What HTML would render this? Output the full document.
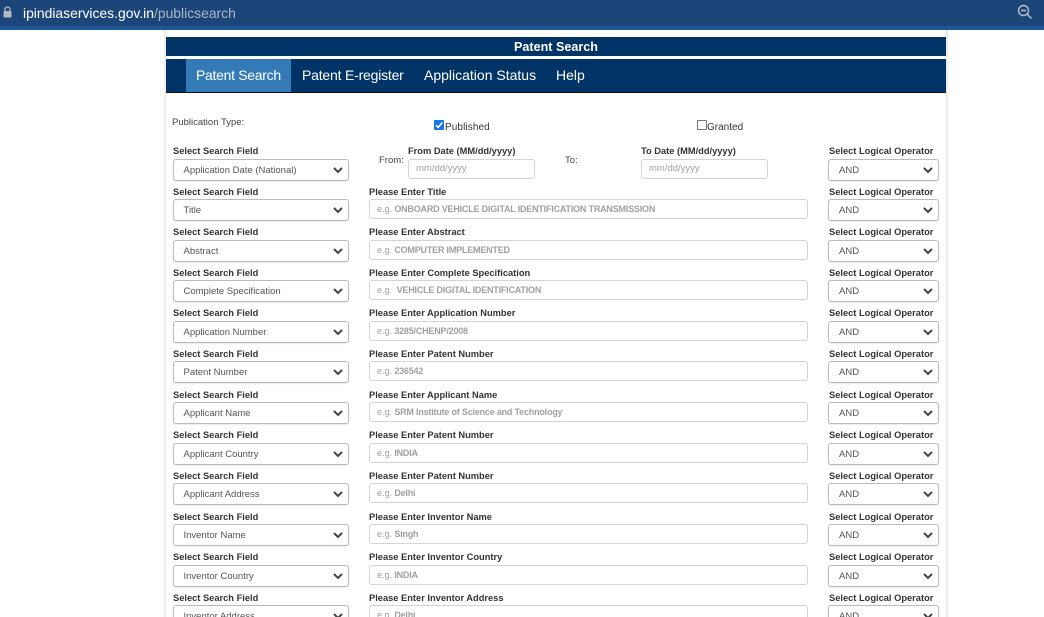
<!DOCTYPE html>
<html><head><meta charset="utf-8">
<style>
html,body{margin:0;padding:0;width:1044px;height:617px;overflow:hidden;background:#fff;font-family:"Liberation Sans",Arial,sans-serif}
#v{position:relative;width:1044px;height:617px;overflow:hidden}
#v div,#v svg{position:absolute}
.t{white-space:nowrap}
.l{font-size:9.3px;font-weight:bold;color:#333;line-height:12px;white-space:nowrap}
.s{border:1px solid #bbb;border-radius:3px;height:22px;line-height:22px;box-sizing:border-box;background:#fff;font-size:9.5px;color:#555;box-shadow:0 1px 1px rgba(0,0,0,.08);white-space:nowrap;padding-left:10px}
.a{left:172.5px;width:176.5px}
.b{left:828px;width:111px}
.s svg{right:4px;top:6px}
.i{left:369px;width:439px;height:20px;border:1px solid #d4d4d4;border-radius:3px;box-sizing:border-box;background:#fff;font-size:9px;letter-spacing:-.2px;font-weight:bold;color:#a0a0a0;line-height:19px;padding-left:7px;white-space:nowrap}
.i span{font-weight:normal;letter-spacing:0}
.d{font-size:9.5px;letter-spacing:0;line-height:18px;font-weight:normal;width:127px}
</style></head><body><div id="v">
<div style="left:0;top:0;width:1044px;height:26px;background:#1c4679"></div>
<div style="left:0;top:26px;width:1044px;height:4px;background:#1f5698"></div>
<svg style="left:3px;top:6px" width="9" height="12" viewBox="0 0 9 12"><path d="M2 5V3.5a2.5 2.5 0 0 1 5 0V5" fill="none" stroke="#b4b9c2" stroke-width="1.3"/><rect x="0.5" y="5" width="8" height="6.5" rx="1" fill="#b4b9c2"/></svg>
<div class="t" style="left:23px;top:4px;font-size:13.9px;line-height:18px;color:#fff">ipindiaservices.gov.in<span style="color:#a9b6c8">/publicsearch</span></div>
<svg style="left:1017px;top:4px" width="16" height="16" viewBox="0 0 16 16"><circle cx="6.5" cy="6.5" r="5" fill="none" stroke="#b5bdc8" stroke-width="1.4"/><path d="M4 6.5h5M10.3 10.3L14.5 14.5" fill="none" stroke="#b5bdc8" stroke-width="1.5"/></svg>

<div style="left:163px;top:30px;width:3px;height:587px;background:linear-gradient(90deg,#fff,#e6e6e6)"></div>
<div style="left:946px;top:30px;width:3px;height:587px;background:linear-gradient(90deg,#e2e2e2,#fff)"></div>

<div style="left:166px;top:37px;width:780px;height:19px;background:#003366"></div>
<div class="t" style="left:166px;top:37px;width:780px;height:19px;line-height:20px;text-align:center;color:#fff;font-size:12.6px;font-weight:bold">Patent Search</div>
<div style="left:166px;top:59px;width:780px;height:33px;background:#003366"></div>
<div style="left:166px;top:92px;width:780px;height:1px;background:#111"></div>
<div style="left:186px;top:59px;width:105px;height:33px;background:#337ab7"></div>
<div class="t" style="left:196px;top:59px;line-height:33px;font-size:14px;letter-spacing:-.3px;color:#fff">Patent Search</div>
<div class="t" style="left:302px;top:59px;line-height:33px;font-size:14px;letter-spacing:-.2px;color:#fff">Patent E-register</div>
<div class="t" style="left:424px;top:59px;line-height:33px;font-size:14px;color:#fff">Application Status</div>
<div class="t" style="left:556px;top:59px;line-height:33px;font-size:14px;color:#fff">Help</div>

<div class="t" style="left:172px;top:117px;font-size:9.5px;line-height:12px;color:#444">Publication Type:</div>
<div style="left:434px;top:120px;width:10px;height:10px;background:#1a73e8;border-radius:1px"></div>
<svg style="left:434px;top:120px" width="10" height="10" viewBox="0 0 10 10"><path d="M2 5.2L4.2 7.4L8.2 2.6" fill="none" stroke="#fff" stroke-width="1.6"/></svg>
<div class="t" style="left:445px;top:120.5px;font-size:10px;line-height:13px;color:#333;letter-spacing:.1px">Published</div>
<div style="left:697px;top:120px;width:10px;height:10px;box-sizing:border-box;border:1px solid #777;border-radius:1px;background:#fff"></div>
<div class="t" style="left:707px;top:120.5px;font-size:10px;line-height:13px;color:#333">Granted</div>

<div class="l" style="left:173px;top:145px">Select Search Field</div>
<div class="s a" style="top:158.5px">Application Date (National)<svg width="12" height="8" viewBox="0 0 12 8"><path d="M2 2L6 6L10 2" fill="none" stroke="#444" stroke-width="2"/></svg></div>
<div class="t" style="left:379px;top:155px;font-size:9.5px;line-height:12px;color:#444">From:</div>
<div class="l" style="left:408px;top:145px">From Date (MM/dd/yyyy)</div>
<div class="i d" style="left:408px;top:158.5px">mm/dd/yyyy</div>
<div class="t" style="left:565px;top:155px;font-size:9.5px;line-height:12px;color:#444">To:</div>
<div class="l" style="left:641px;top:145px">To Date (MM/dd/yyyy)</div>
<div class="i d" style="left:641px;top:158.5px">mm/dd/yyyy</div>
<div class="l" style="left:829px;top:145px">Select Logical Operator</div>
<div class="s b" style="top:158.5px">AND<svg width="12" height="8" viewBox="0 0 12 8"><path d="M2 2L6 6L10 2" fill="none" stroke="#444" stroke-width="2"/></svg></div>

<div class="l" style="left:173px;top:185.5px">Select Search Field</div>
<div class="s a" style="top:199.3px">Title<svg width="12" height="8" viewBox="0 0 12 8"><path d="M2 2L6 6L10 2" fill="none" stroke="#444" stroke-width="2"/></svg></div>
<div class="l" style="left:369px;top:185.5px">Please Enter Title</div>
<div class="i" style="top:199.3px"><span>e.g.</span> ONBOARD VEHICLE DIGITAL IDENTIFICATION TRANSMISSION</div>
<div class="l" style="left:829px;top:185.5px">Select Logical Operator</div>
<div class="s b" style="top:199.3px">AND<svg width="12" height="8" viewBox="0 0 12 8"><path d="M2 2L6 6L10 2" fill="none" stroke="#444" stroke-width="2"/></svg></div>

<div class="l" style="left:173px;top:226px">Select Search Field</div>
<div class="s a" style="top:239.7px">Abstract<svg width="12" height="8" viewBox="0 0 12 8"><path d="M2 2L6 6L10 2" fill="none" stroke="#444" stroke-width="2"/></svg></div>
<div class="l" style="left:369px;top:226px">Please Enter Abstract</div>
<div class="i" style="top:239.7px;line-height:18px"><span>e.g.</span> COMPUTER IMPLEMENTED</div>
<div class="l" style="left:829px;top:226px">Select Logical Operator</div>
<div class="s b" style="top:239.7px">AND<svg width="12" height="8" viewBox="0 0 12 8"><path d="M2 2L6 6L10 2" fill="none" stroke="#444" stroke-width="2"/></svg></div>

<div class="l" style="left:173px;top:266.5px">Select Search Field</div>
<div class="s a" style="top:280.3px">Complete Specification<svg width="12" height="8" viewBox="0 0 12 8"><path d="M2 2L6 6L10 2" fill="none" stroke="#444" stroke-width="2"/></svg></div>
<div class="l" style="left:369px;top:266.5px">Please Enter Complete Specification</div>
<div class="i" style="top:280.3px"><span>e.g.</span>&nbsp; VEHICLE DIGITAL IDENTIFICATION</div>
<div class="l" style="left:829px;top:266.5px">Select Logical Operator</div>
<div class="s b" style="top:280.3px">AND<svg width="12" height="8" viewBox="0 0 12 8"><path d="M2 2L6 6L10 2" fill="none" stroke="#444" stroke-width="2"/></svg></div>

<div class="l" style="left:173px;top:307px">Select Search Field</div>
<div class="s a" style="top:320.8px">Application Number<svg width="12" height="8" viewBox="0 0 12 8"><path d="M2 2L6 6L10 2" fill="none" stroke="#444" stroke-width="2"/></svg></div>
<div class="l" style="left:369px;top:307px">Please Enter Application Number</div>
<div class="i" style="top:320.8px"><span>e.g.</span> 3285/CHENP/2008</div>
<div class="l" style="left:829px;top:307px">Select Logical Operator</div>
<div class="s b" style="top:320.8px">AND<svg width="12" height="8" viewBox="0 0 12 8"><path d="M2 2L6 6L10 2" fill="none" stroke="#444" stroke-width="2"/></svg></div>

<div class="l" style="left:173px;top:347.5px">Select Search Field</div>
<div class="s a" style="top:361.4px">Patent Number<svg width="12" height="8" viewBox="0 0 12 8"><path d="M2 2L6 6L10 2" fill="none" stroke="#444" stroke-width="2"/></svg></div>
<div class="l" style="left:369px;top:347.5px">Please Enter Patent Number</div>
<div class="i" style="top:361.4px"><span>e.g.</span> 236542</div>
<div class="l" style="left:829px;top:347.5px">Select Logical Operator</div>
<div class="s b" style="top:361.4px">AND<svg width="12" height="8" viewBox="0 0 12 8"><path d="M2 2L6 6L10 2" fill="none" stroke="#444" stroke-width="2"/></svg></div>

<div class="l" style="left:173px;top:388.5px">Select Search Field</div>
<div class="s a" style="top:402px">Applicant Name<svg width="12" height="8" viewBox="0 0 12 8"><path d="M2 2L6 6L10 2" fill="none" stroke="#444" stroke-width="2"/></svg></div>
<div class="l" style="left:369px;top:388.5px">Please Enter Applicant Name</div>
<div class="i" style="top:402px"><span>e.g.</span> SRM Institute of Science and Technology</div>
<div class="l" style="left:829px;top:388.5px">Select Logical Operator</div>
<div class="s b" style="top:402px">AND<svg width="12" height="8" viewBox="0 0 12 8"><path d="M2 2L6 6L10 2" fill="none" stroke="#444" stroke-width="2"/></svg></div>

<div class="l" style="left:173px;top:429px">Select Search Field</div>
<div class="s a" style="top:442.7px">Applicant Country<svg width="12" height="8" viewBox="0 0 12 8"><path d="M2 2L6 6L10 2" fill="none" stroke="#444" stroke-width="2"/></svg></div>
<div class="l" style="left:369px;top:429px">Please Enter Patent Number</div>
<div class="i" style="top:442.7px"><span>e.g.</span> INDIA</div>
<div class="l" style="left:829px;top:429px">Select Logical Operator</div>
<div class="s b" style="top:442.7px">AND<svg width="12" height="8" viewBox="0 0 12 8"><path d="M2 2L6 6L10 2" fill="none" stroke="#444" stroke-width="2"/></svg></div>

<div class="l" style="left:173px;top:470px">Select Search Field</div>
<div class="s a" style="top:483.3px">Applicant Address<svg width="12" height="8" viewBox="0 0 12 8"><path d="M2 2L6 6L10 2" fill="none" stroke="#444" stroke-width="2"/></svg></div>
<div class="l" style="left:369px;top:470px">Please Enter Patent Number</div>
<div class="i" style="top:483.3px"><span>e.g.</span> Delhi</div>
<div class="l" style="left:829px;top:470px">Select Logical Operator</div>
<div class="s b" style="top:483.3px">AND<svg width="12" height="8" viewBox="0 0 12 8"><path d="M2 2L6 6L10 2" fill="none" stroke="#444" stroke-width="2"/></svg></div>

<div class="l" style="left:173px;top:510.5px">Select Search Field</div>
<div class="s a" style="top:524px">Inventor Name<svg width="12" height="8" viewBox="0 0 12 8"><path d="M2 2L6 6L10 2" fill="none" stroke="#444" stroke-width="2"/></svg></div>
<div class="l" style="left:369px;top:510.5px">Please Enter Inventor Name</div>
<div class="i" style="top:524px"><span>e.g.</span> Singh</div>
<div class="l" style="left:829px;top:510.5px">Select Logical Operator</div>
<div class="s b" style="top:524px">AND<svg width="12" height="8" viewBox="0 0 12 8"><path d="M2 2L6 6L10 2" fill="none" stroke="#444" stroke-width="2"/></svg></div>

<div class="l" style="left:173px;top:551px">Select Search Field</div>
<div class="s a" style="top:564.5px">Inventor Country<svg width="12" height="8" viewBox="0 0 12 8"><path d="M2 2L6 6L10 2" fill="none" stroke="#444" stroke-width="2"/></svg></div>
<div class="l" style="left:369px;top:551px">Please Enter Inventor Country</div>
<div class="i" style="top:564.5px;line-height:18px"><span>e.g.</span> INDIA</div>
<div class="l" style="left:829px;top:551px">Select Logical Operator</div>
<div class="s b" style="top:564.5px">AND<svg width="12" height="8" viewBox="0 0 12 8"><path d="M2 2L6 6L10 2" fill="none" stroke="#444" stroke-width="2"/></svg></div>

<div class="l" style="left:173px;top:592px">Select Search Field</div>
<div class="s a" style="top:605.2px">Inventor Address<svg width="12" height="8" viewBox="0 0 12 8"><path d="M2 2L6 6L10 2" fill="none" stroke="#444" stroke-width="2"/></svg></div>
<div class="l" style="left:369px;top:592px">Please Enter Inventor Address</div>
<div class="i" style="top:605.2px"><span>e.g.</span> Delhi</div>
<div class="l" style="left:829px;top:592px">Select Logical Operator</div>
<div class="s b" style="top:605.2px">AND<svg width="12" height="8" viewBox="0 0 12 8"><path d="M2 2L6 6L10 2" fill="none" stroke="#444" stroke-width="2"/></svg></div>
</div></body></html>
